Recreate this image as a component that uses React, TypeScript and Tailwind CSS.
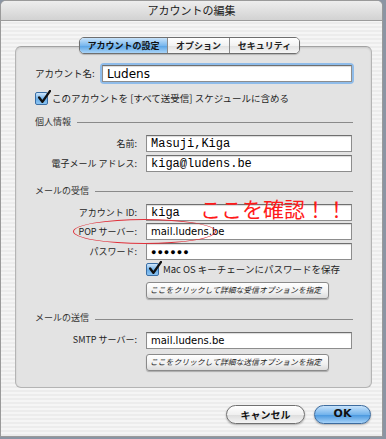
// Account edit sheet - Mac OS X style mail account settings dialog.

const jp = 'font-["Noto_Sans_CJK_JP","Noto_Sans",sans-serif]';
const mono = 'font-["Liberation_Mono","DejaVu_Sans_Mono",monospace]';
const sans = 'font-["DejaVu_Sans","Liberation_Sans",sans-serif]';

// Aqua checkbox with a check mark.
function AquaCheck() {
  return (
    <span className="relative h-[13px] w-[13px] shrink-0 rounded-[2px] border border-[#3a6ea5] bg-[linear-gradient(#cfe6fb,#6aaee8_55%,#8cc4f2)]">
      <svg viewBox="0 0 13 13" className="absolute -top-[3px] left-[1px] h-[14px] w-[14px]">
        <path d="M2 7 L5 11 L12 1" fill="none" stroke="#111" strokeWidth="2.2" strokeLinecap="round" strokeLinejoin="round" />
      </svg>
    </span>
  );
}

function Field({ children, className = '' }: { children?: React.ReactNode; className?: string }) {
  return (
    <div
      className={`flex h-[17px] items-center overflow-hidden whitespace-nowrap border border-[#8d8d8d] border-t-[#6f6f6f] bg-white px-[4px] shadow-[inset_0_1px_1px_rgba(0,0,0,0.15)] ${className}`}
    >
      {children}
    </div>
  );
}

function Row({ label, children, className = '' }: { label: string; children: React.ReactNode; className?: string }) {
  return (
    <div className={`flex items-center ${className}`}>
      <span className={`w-[102px] shrink-0 whitespace-nowrap text-right text-[9px] text-[#1e1e1e] ${jp}`}>{label}</span>
      <div className="ml-[9px] w-[206px] shrink-0">{children}</div>
    </div>
  );
}

function Section({ title, className = '' }: { title: string; className?: string }) {
  return (
    <div className={`flex h-[14px] items-center ${className}`}>
      <span className={`shrink-0 whitespace-nowrap text-[9px] text-[#333] ${jp}`}>{title}</span>
      <div className="ml-[6px] mt-[3px] h-px flex-1 bg-[#8a8a8a]" />
    </div>
  );
}

function OptionButton({ label }: { label: string }) {
  return (
    <div className="flex h-[17px] w-[183px] items-center overflow-hidden whitespace-nowrap rounded-[3px] border border-[#8a8a8a] bg-[linear-gradient(#ffffff,#f0f0f0_60%,#dcdcdc)] px-[3px] shadow-[0_1px_1px_rgba(0,0,0,0.25)]">
      <span className={`text-[7.8px] italic text-[#222] ${jp}`}>{label}</span>
    </div>
  );
}

export default function App() {
  return (
    <div className="h-[439px] w-[386px] overflow-hidden bg-[#8b95a3]">
      <div className="flex h-[437px] w-[383px] flex-col overflow-hidden rounded-t-[6px] border border-[#9a9a9a] bg-[repeating-linear-gradient(0deg,#ececec_0px,#ececec_2px,#f5f5f5_2px,#f5f5f5_4px)]">
        {/* Title bar */}
        <div className={`flex h-[20px] shrink-0 items-center justify-center border-b border-[#9c9c9c] bg-[linear-gradient(#eeeeee,#d2d2d2)] text-[11px] text-[#1a1a1a] ${jp}`}>
          アカウントの編集
        </div>

        <div className="flex flex-col pl-[14px] pr-[11px]">
          {/* Tabs */}
          <div className="relative z-10 -mb-[8px] mt-[16px] flex justify-center pr-[7px]">
            <div className={`flex h-[17px] overflow-hidden whitespace-nowrap rounded-[5px] border border-[#6f6f6f] text-[9px] font-bold shadow-[0_1px_1px_rgba(0,0,0,0.2)] ${jp}`}>
              <span className="flex w-[87px] items-center justify-center bg-[linear-gradient(#c9e3fa,#7ab8ee_50%,#5da6e6_55%,#a9d4f8)] text-[#111]">
                アカウントの設定
              </span>
              <span className="flex w-[62px] items-center justify-center border-l border-[#8a8a8a] bg-[linear-gradient(#ffffff,#f2f2f2_50%,#e2e2e2_55%,#f6f6f6)] text-[#222]">
                オプション
              </span>
              <span className="flex w-[70px] items-center justify-center border-l border-[#8a8a8a] bg-[linear-gradient(#ffffff,#f2f2f2_50%,#e2e2e2_55%,#f6f6f6)] text-[#222]">
                セキュリティ
              </span>
            </div>
          </div>

          {/* Group box */}
          <div className="relative h-[342px] w-[357px] rounded-[6px] border border-[#b4b4b4] border-t-[#a2a2a2] bg-[#e3e3e3] pl-[19px] pr-[18px] pt-[18px] shadow-[inset_0_1px_2px_rgba(0,0,0,0.12)]">
            <div className="flex items-center">
              <span className={`w-[58px] shrink-0 whitespace-nowrap text-[9.5px] text-[#1e1e1e] ${jp}`}>アカウント名:</span>
              <div className="ml-[9px] w-[250px] shrink-0 rounded-[2px] shadow-[0_0_0_2px_#8fbcea]">
                <Field>
                  <span className={`text-[12px] text-black ${sans}`}>Ludens</span>
                </Field>
              </div>
            </div>

            <div className="mt-[9px] flex items-center">
              <AquaCheck />
              <span className={`ml-[4px] whitespace-nowrap text-[9.5px] text-[#1e1e1e] ${jp}`}>
                このアカウントを [すべて送受信] スケジュールに含める
              </span>
            </div>

            <Section title="個人情報" className="mt-[9px]" />

            <Row label="名前:" className="mt-[7px]">
              <Field>
                <span className={`text-[12px] text-black ${mono}`}>Masuji,Kiga</span>
              </Field>
            </Row>
            <Row label="電子メール アドレス:" className="mt-[3px]">
              <Field>
                <span className={`text-[12px] text-black ${mono}`}>kiga@ludens.be</span>
              </Field>
            </Row>

            <Section title="メールの受信" className="mt-[11px]" />

            <Row label="アカウント ID:" className="mt-[7px]">
              <Field>
                <span className={`text-[12px] text-black ${mono}`}>kiga</span>
              </Field>
            </Row>
            <Row label="POP サーバー:" className="mt-[2px]">
              <Field>
                <span className={`text-[10px] text-black ${sans}`}>mail.ludens.be</span>
              </Field>
            </Row>
            <Row label="パスワード:" className="mt-[3px]">
              <Field>
                <span className="text-[9px] leading-none tracking-[1px] text-black">●●●●●●</span>
              </Field>
            </Row>

            <div className="ml-[111px] mt-[2px] flex items-center">
              <AquaCheck />
              <span className={`ml-[4px] whitespace-nowrap text-[9.5px] text-[#1e1e1e] ${jp}`}>Mac OS キーチェーンにパスワードを保存</span>
            </div>
            <div className="ml-[111px] mt-[5px]">
              <OptionButton label="ここをクリックして詳細な受信オプションを指定" />
            </div>

            <Section title="メールの送信" className="mt-[12px]" />

            <Row label="SMTP サーバー:" className="mt-[7px]">
              <Field>
                <span className={`text-[10px] text-black ${sans}`}>mail.ludens.be</span>
              </Field>
            </Row>
            <div className="ml-[111px] mt-[5px]">
              <OptionButton label="ここをクリックして詳細な送信オプションを指定" />
            </div>

            {/* Annotation overlays */}
            <span className={`absolute left-[184px] top-[151px] whitespace-nowrap text-[21px] leading-none text-[#ff1a1a] ${jp}`}>
              ここを確認！！
            </span>
            <div className="absolute left-[57px] top-[172px] h-[25px] w-[143px] rounded-[50%] border border-[#e0303a]" />
          </div>

          {/* Bottom buttons */}
          <div className="mt-[17px] flex justify-end gap-[9px]">
            <div className={`flex h-[19px] w-[79px] items-center justify-center rounded-full border border-[#707070] bg-[linear-gradient(#ffffff,#f0f0f0_50%,#dedede_55%,#f4f4f4)] text-[10px] font-bold text-[#111] shadow-[0_1px_2px_rgba(0,0,0,0.3)] ${jp}`}>
              キャンセル
            </div>
            <div className={`flex h-[19px] w-[57px] items-center justify-center rounded-full border border-[#3c6b9e] bg-[linear-gradient(#c6e2fb,#74b4ec_50%,#4d9ae0_55%,#a6d2f8)] text-[11px] font-bold text-[#111] shadow-[0_1px_2px_rgba(0,0,0,0.3)] ${sans}`}>
              OK
            </div>
          </div>
        </div>
      </div>
    </div>
  );
}
